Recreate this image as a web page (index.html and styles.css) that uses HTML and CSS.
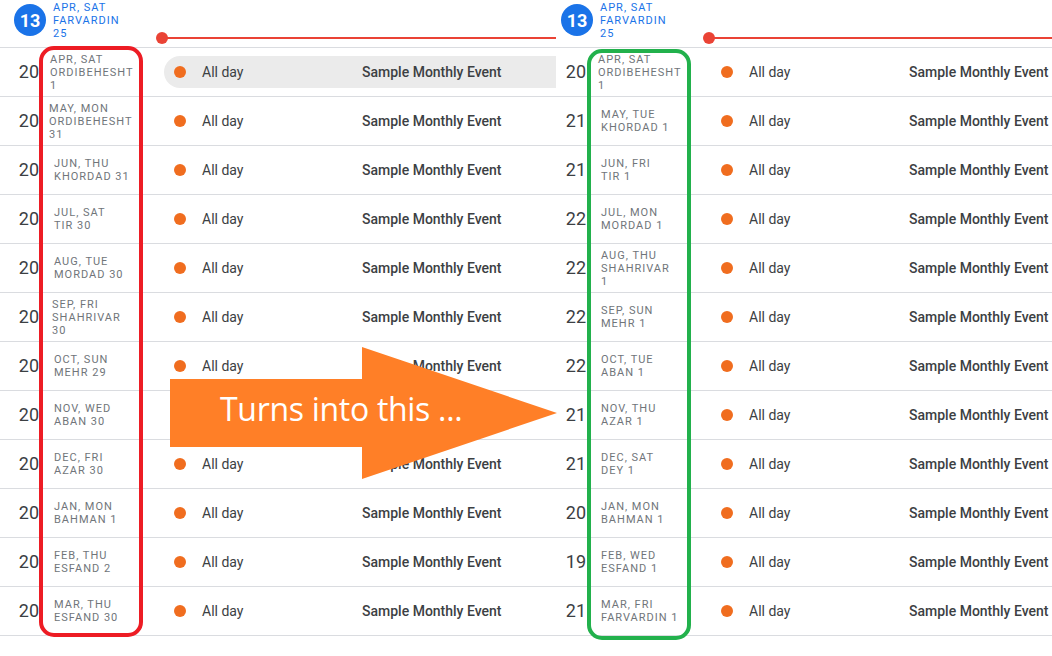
FILE: index.html
```html
<!DOCTYPE html>
<html>
<head>
<meta charset="utf-8">
<link rel="stylesheet" href="styles.css">
</head>
<body>
<div class="stage">
  <section class="panel panel-left">
    <div class="inner">
      <header class="head">
        <div class="today">
          <div class="today-num">13</div>
          <div class="today-lbl">APR, SAT<br>FARVARDIN<br>25</div>
        </div>
        <div class="now"><span class="now-dot"></span><span class="now-line"></span></div>
      </header>
      <div class="row"><div class="date"><span class="num">20</span><span class="lbl off-50">APR, SAT<br>ORDIBEHESHT<br>1</span></div><div class="ev hover"><span class="dot"></span><span class="time">All day</span><span class="title">Sample Monthly Event</span></div></div>
      <div class="row"><div class="date"><span class="num">20</span><span class="lbl off-49">MAY, MON<br>ORDIBEHESHT<br>31</span></div><div class="ev"><span class="dot"></span><span class="time">All day</span><span class="title">Sample Monthly Event</span></div></div>
      <div class="row"><div class="date"><span class="num">20</span><span class="lbl">JUN, THU<br>KHORDAD 31</span></div><div class="ev"><span class="dot"></span><span class="time">All day</span><span class="title">Sample Monthly Event</span></div></div>
      <div class="row"><div class="date"><span class="num">20</span><span class="lbl">JUL, SAT<br>TIR 30</span></div><div class="ev"><span class="dot"></span><span class="time">All day</span><span class="title">Sample Monthly Event</span></div></div>
      <div class="row"><div class="date"><span class="num">20</span><span class="lbl">AUG, TUE<br>MORDAD 30</span></div><div class="ev"><span class="dot"></span><span class="time">All day</span><span class="title">Sample Monthly Event</span></div></div>
      <div class="row"><div class="date"><span class="num">20</span><span class="lbl off-52">SEP, FRI<br>SHAHRIVAR<br>30</span></div><div class="ev"><span class="dot"></span><span class="time">All day</span><span class="title">Sample Monthly Event</span></div></div>
      <div class="row"><div class="date"><span class="num">20</span><span class="lbl">OCT, SUN<br>MEHR 29</span></div><div class="ev"><span class="dot"></span><span class="time">All day</span><span class="title">Sample Monthly Event</span></div></div>
      <div class="row"><div class="date"><span class="num">20</span><span class="lbl">NOV, WED<br>ABAN 30</span></div><div class="ev"><span class="dot"></span><span class="time">All day</span><span class="title">Sample Monthly Event</span></div></div>
      <div class="row"><div class="date"><span class="num">20</span><span class="lbl">DEC, FRI<br>AZAR 30</span></div><div class="ev"><span class="dot"></span><span class="time">All day</span><span class="title">Sample Monthly Event</span></div></div>
      <div class="row"><div class="date"><span class="num">20</span><span class="lbl">JAN, MON<br>BAHMAN 1</span></div><div class="ev"><span class="dot"></span><span class="time">All day</span><span class="title">Sample Monthly Event</span></div></div>
      <div class="row"><div class="date"><span class="num">20</span><span class="lbl">FEB, THU<br>ESFAND 2</span></div><div class="ev"><span class="dot"></span><span class="time">All day</span><span class="title">Sample Monthly Event</span></div></div>
      <div class="row"><div class="date"><span class="num">20</span><span class="lbl">MAR, THU<br>ESFAND 30</span></div><div class="ev"><span class="dot"></span><span class="time">All day</span><span class="title">Sample Monthly Event</span></div></div>
    </div>
  </section>
  <section class="panel panel-right">
    <div class="inner">
      <header class="head">
        <div class="today">
          <div class="today-num">13</div>
          <div class="today-lbl">APR, SAT<br>FARVARDIN<br>25</div>
        </div>
        <div class="now"><span class="now-dot"></span><span class="now-line"></span></div>
      </header>
      <div class="row"><div class="date"><span class="num">20</span><span class="lbl off-51">APR, SAT<br>ORDIBEHESHT<br>1</span></div><div class="ev"><span class="dot"></span><span class="time">All day</span><span class="title">Sample Monthly Event</span></div></div>
      <div class="row"><div class="date"><span class="num">21</span><span class="lbl">MAY, TUE<br>KHORDAD 1</span></div><div class="ev"><span class="dot"></span><span class="time">All day</span><span class="title">Sample Monthly Event</span></div></div>
      <div class="row"><div class="date"><span class="num">21</span><span class="lbl">JUN, FRI<br>TIR 1</span></div><div class="ev"><span class="dot"></span><span class="time">All day</span><span class="title">Sample Monthly Event</span></div></div>
      <div class="row"><div class="date"><span class="num">22</span><span class="lbl">JUL, MON<br>MORDAD 1</span></div><div class="ev"><span class="dot"></span><span class="time">All day</span><span class="title">Sample Monthly Event</span></div></div>
      <div class="row"><div class="date"><span class="num">22</span><span class="lbl">AUG, THU<br>SHAHRIVAR<br>1</span></div><div class="ev"><span class="dot"></span><span class="time">All day</span><span class="title">Sample Monthly Event</span></div></div>
      <div class="row"><div class="date"><span class="num">22</span><span class="lbl">SEP, SUN<br>MEHR 1</span></div><div class="ev"><span class="dot"></span><span class="time">All day</span><span class="title">Sample Monthly Event</span></div></div>
      <div class="row"><div class="date"><span class="num">22</span><span class="lbl">OCT, TUE<br>ABAN 1</span></div><div class="ev"><span class="dot"></span><span class="time">All day</span><span class="title">Sample Monthly Event</span></div></div>
      <div class="row"><div class="date"><span class="num">21</span><span class="lbl">NOV, THU<br>AZAR 1</span></div><div class="ev"><span class="dot"></span><span class="time">All day</span><span class="title">Sample Monthly Event</span></div></div>
      <div class="row"><div class="date"><span class="num">21</span><span class="lbl">DEC, SAT<br>DEY 1</span></div><div class="ev"><span class="dot"></span><span class="time">All day</span><span class="title">Sample Monthly Event</span></div></div>
      <div class="row"><div class="date"><span class="num">20</span><span class="lbl">JAN, MON<br>BAHMAN 1</span></div><div class="ev"><span class="dot"></span><span class="time">All day</span><span class="title">Sample Monthly Event</span></div></div>
      <div class="row"><div class="date"><span class="num">19</span><span class="lbl">FEB, WED<br>ESFAND 1</span></div><div class="ev"><span class="dot"></span><span class="time">All day</span><span class="title">Sample Monthly Event</span></div></div>
      <div class="row"><div class="date"><span class="num">21</span><span class="lbl">MAR, FRI<br>FARVARDIN 1</span></div><div class="ev"><span class="dot"></span><span class="time">All day</span><span class="title">Sample Monthly Event</span></div></div>
    </div>
  </section>

  <div class="mark mark-red"></div>
  <div class="mark mark-green"></div>

  <svg class="arrow" width="1052" height="656" viewBox="0 0 1052 656">
    <polygon points="170,379 362,379 362,347 557,413 362,479 362,447 170,447" fill="#ff7f27"/>
  </svg>
  <div class="arrow-text">Turns into this ...</div>
</div>
</body>
</html>
```
FILE: styles.css
```css
* { box-sizing: border-box; }
html, body { margin: 0; padding: 0; background: #fff; }
body { font-family: Roboto, "Liberation Sans", sans-serif; color: #3c4043; }

.stage {
  position: relative;
  width: 1052px;
  height: 656px;
  overflow: hidden;
  display: flex;
}

.panel { overflow: hidden; height: 656px; }
.panel-left { width: 556px; flex: none; }
.panel-right { flex: 1; }
.inner { width: 560px; }
.panel-right .inner { margin-left: -9px; width: 520px; }

/* header */
.head {
  height: 48px;
  border-bottom: 1px solid #dadce0;
  display: grid;
  grid-template-columns: 156px 1fr;
}
.today { display: flex; align-items: flex-start; }
.today-num {
  width: 32px; height: 32px;
  margin: 4px 0 0 14px;
  border-radius: 50%;
  background: #1a73e8;
  color: #fff;
  font-size: 18px;
  font-weight: 700;
  display: flex; align-items: center; justify-content: center;
}
.today-lbl {
  margin: 1px 0 0 7px;
  font-size: 11px;
  line-height: 13px;
  letter-spacing: 1px;
  font-weight: 400;
  color: #1a73e8;
}
.now { display: flex; align-items: center; margin-top: 32px; height: 12px; }
.now-dot { width: 12px; height: 12px; border-radius: 50%; background: #ea4335; flex: none; }
.now-line { flex: 1; height: 2px; background: #ea4335; margin-left: -2px; }

/* rows */
.row {
  height: 49px;
  border-bottom: 1px solid #dadce0;
  display: grid;
  grid-template-columns: 164px 1fr;
  align-items: center;
}
.date { display: flex; align-items: center; }
.num {
  width: 39px;
  text-align: right;
  font-size: 18px;
  line-height: 22px;
  color: #3c4043;
  flex: none;
}
.lbl {
  margin-left: 15px;
  font-size: 11px;
  line-height: 13px;
  letter-spacing: 1px;
  font-weight: 400;
  color: #70757a;
  white-space: nowrap;
}
.lbl.off-49 { margin-left: 10px; }
.lbl.off-50 { margin-left: 11px; }
.lbl.off-51 { margin-left: 12px; }
.lbl.off-52 { margin-left: 13px; }

.ev {
  height: 32px;
  display: flex;
  align-items: center;
  padding-left: 10px;
  border-radius: 16px 0 0 16px;
  font-size: 14px;
}
.ev.hover { background: #ebebeb; }
.dot { width: 12px; height: 12px; border-radius: 50%; background: #f06d1f; flex: none; }
.time { margin-left: 16px; width: 160px; flex: none; }
.title { font-weight: 500; white-space: nowrap; }

/* annotations */
.mark {
  position: absolute;
  border-style: solid;
  border-width: 4.5px;
  border-radius: 15px;
}
.mark-red { left: 39px; top: 46px; width: 104px; height: 591px; border-color: #ed1c24; }
.mark-green { left: 587px; top: 49px; width: 104px; height: 591px; border-color: #22b14c; }

.arrow { position: absolute; left: 0; top: 0; pointer-events: none; }
.arrow-text {
  position: absolute;
  left: 220px;
  top: 393px;
  font-family: "Open Sans", "Noto Sans", sans-serif;
  font-size: 32px;
  line-height: 32px;
  letter-spacing: -0.3px;
  color: #fff;
  white-space: nowrap;
}
```
